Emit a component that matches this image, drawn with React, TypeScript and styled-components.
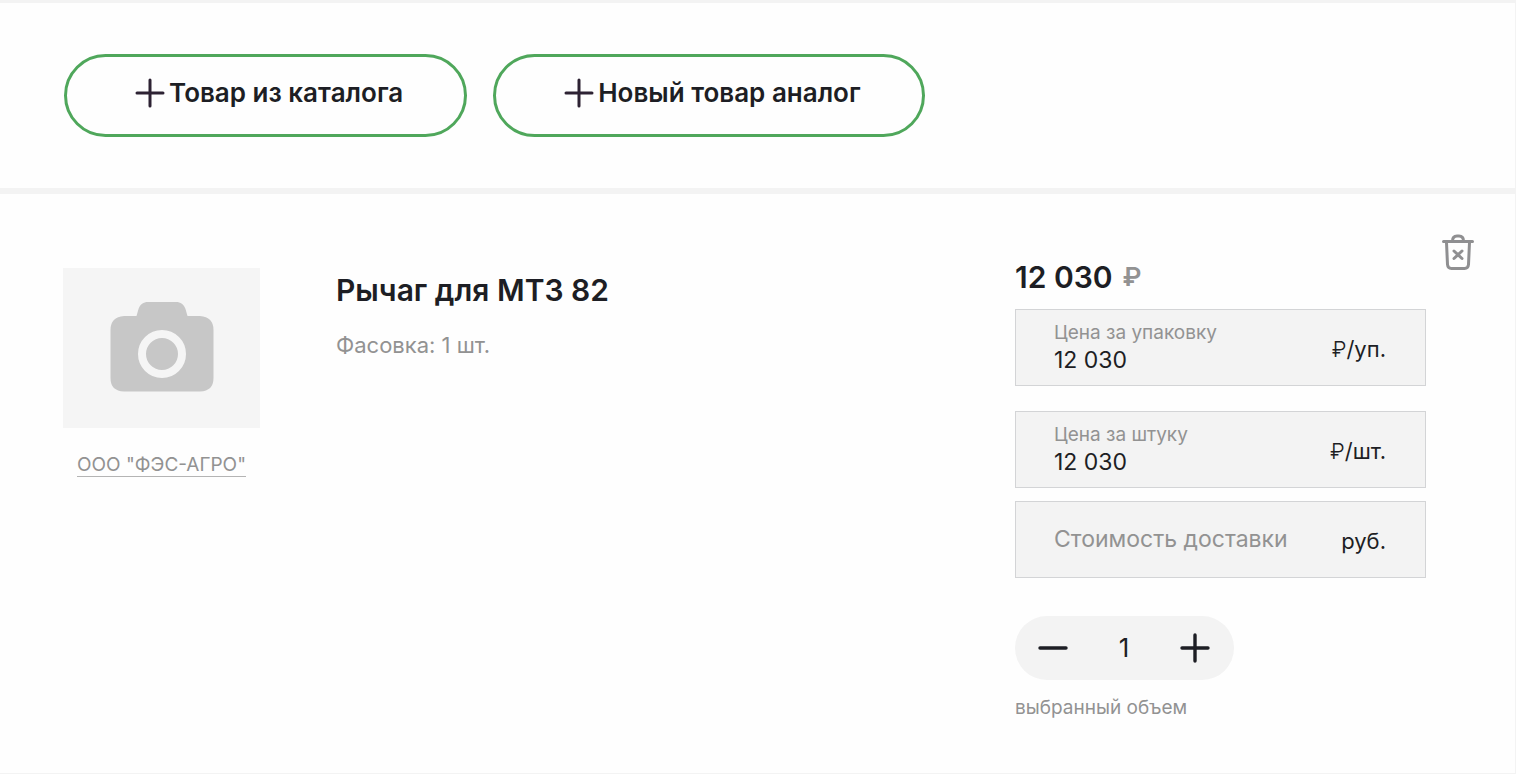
import React, { useState } from "react";
import styled, { createGlobalStyle } from "styled-components";

const ink = "#1d1e24";
const muted = "#929292";

const GlobalStyle = createGlobalStyle`
  *, *::before, *::after { box-sizing: border-box; }
  body {
    margin: 0;
    background: #fefefe;
    color: ${ink};
    font-family: Inter, "Noto Sans", sans-serif;
  }
  button, input { font: inherit; color: inherit; }
`;

const Page = styled.main`
  min-height: 100vh;
  border: solid #f3f3f3;
  border-width: 3px 1px 1px 0;
`;

const Toolbar = styled.div`
  display: flex;
  flex-wrap: wrap;
  gap: 26px;
  padding: 51px 64px;
  border-bottom: 6px solid #f3f3f3;
`;

const AddButton = styled.button`
  display: flex;
  align-items: center;
  gap: 4px;
  height: 83px;
  padding: 0 61px 6px 68px;
  border: 3px solid #4fa75b;
  border-radius: 42px;
  background: none;
  font-size: 26px;
  line-height: 32px;
  font-weight: 600;
  white-space: nowrap;
  cursor: pointer;
`;

const Product = styled.article`
  display: grid;
  grid-template-columns: 197px minmax(0, 1fr) 411px 48px;
  align-items: start;
  padding: 40px 41px 52px 63px;
`;

const Media = styled.div`
  display: flex;
  flex-direction: column;
  align-items: center;
  gap: 26px;
  padding-top: 34px;
`;

const Photo = styled.div`
  display: flex;
  justify-content: center;
  align-items: center;
  width: 100%;
  height: 160px;
  padding-bottom: 2px;
  background: #f5f5f5;
`;

const Seller = styled.a`
  border-bottom: 1px solid #b4b4b4;
  color: ${muted};
  font-size: 19px;
  line-height: 22px;
  text-decoration: none;
  white-space: nowrap;
`;

const Info = styled.div`
  padding: 38px 24px 0 76px;
`;

const Title = styled.h2`
  margin: 0;
  font-size: 30px;
  line-height: 36px;
  font-weight: 600;
`;

const Packing = styled.p`
  margin: 22px 0 0;
  color: ${muted};
  font-size: 22px;
  line-height: 30px;
`;

const Offer = styled.div`
  display: flex;
  flex-direction: column;
  padding-top: 25px;
`;

const Total = styled.div`
  display: flex;
  align-items: center;
  gap: 10px;
  margin-bottom: 14px;
  font-size: 30px;
  line-height: 36px;
  font-weight: 600;
`;

const Currency = styled.span`
  color: ${muted};
  font-size: 26px;
`;

const Fields = styled.div`
  display: flex;
  flex-direction: column;
  gap: 25px;
  margin-bottom: 13px;
`;

const Field = styled.label`
  display: flex;
  align-items: center;
  justify-content: space-between;
  height: 77px;
  padding: 3px 39px 0 38px;
  border: 1px solid #d3d4d6;
  background: #f3f3f3;
  font-size: 22px;
  line-height: 28px;
  cursor: text;
`;

const FieldBody = styled.span`
  display: flex;
  flex: 1;
  flex-direction: column;
  min-width: 0;
  padding-bottom: 4px;
`;

const FieldCaption = styled.span`
  color: ${muted};
  font-size: 19px;
  line-height: 26px;
`;

const FieldInput = styled.input`
  width: 100%;
  height: 28px;
  padding: 0;
  border: 0;
  outline: 0;
  background: none;
  font-size: 23px;

  &::placeholder {
    color: ${muted};
    opacity: 1;
  }
`;

const Ruble = styled.span`
  font-weight: 300;
`;

const Counter = styled.div`
  display: flex;
  align-items: center;
  justify-content: space-between;
  width: 219px;
  height: 64px;
  margin-top: 38px;
  padding: 0 24px 0 23px;
  border-radius: 32px;
  background: #f3f3f3;
`;

const IconButton = styled.button`
  display: flex;
  padding: 0;
  border: 0;
  background: none;
  cursor: pointer;
`;

const Amount = styled.input`
  width: 60px;
  padding: 0;
  border: 0;
  outline: 0;
  background: none;
  font-size: 26px;
  line-height: 32px;
  text-align: center;
`;

const Hint = styled.p`
  margin: 16px 0 0;
  color: ${muted};
  font-size: 19px;
  line-height: 24px;
`;

const RemoveButton = styled(IconButton)`
  justify-self: end;
`;

const PlusIcon = ({ color = ink, weight = 3 }: { color?: string; weight?: number }) => (
  <svg width="30" height="30" viewBox="0 0 30 30" stroke={color} strokeWidth={weight} strokeLinecap="round" aria-hidden="true">
    <path d="M2 15H28M15 2V28" />
  </svg>
);

const MinusIcon = () => (
  <svg width="30" height="30" viewBox="0 0 30 30" stroke={ink} strokeWidth="3.4" strokeLinecap="round" aria-hidden="true">
    <path d="M2 15H28" />
  </svg>
);

const CameraIcon = () => (
  <svg width="104" height="90" viewBox="0 0 104 90" aria-hidden="true">
    <path
      fill="#c7c7c7"
      d="M14 14H26.500L28.500 7C30 2.500 33.500 0 38 0H66C70.500 0 74 2.500 75.500 7L77.500 14H90Q103.500 15 103.500 28V76Q103.500 89 90 89.500H14Q.5 89 .5 76V28Q.5 15 14 14Z"
    />
    <circle cx="52" cy="52" r="20" fill="none" stroke="#f5f5f5" strokeWidth="8" />
  </svg>
);

const TrashIcon = () => (
  <svg width="32" height="36" viewBox="0 0 32 36" fill="none" stroke="#8f8f91" strokeWidth="3" strokeLinecap="round" strokeLinejoin="round" aria-hidden="true">
    <path d="M1.500 7.500H30.500M4.500 8.500L5.500 30.500Q5.800 34.500 9.500 34.500H22.500Q26.200 34.500 26.500 30.500L27.500 8.500M10.500 7Q10.500 2 15 2H17Q21.500 2 21.500 7" />
    <path d="M12 17L20 24.500M20 17L12 24.500" />
  </svg>
);

type PriceFieldProps = { caption?: string; placeholder?: string; initial?: string; unit: React.ReactNode };

const PriceField = ({ caption, placeholder, initial = "", unit }: PriceFieldProps) => {
  const [value, setValue] = useState(initial);
  return (
    <Field>
      <FieldBody>
        {caption && <FieldCaption>{caption}</FieldCaption>}
        <FieldInput
          value={value}
          placeholder={placeholder}
          aria-label={caption ? undefined : placeholder}
          onChange={(e) => setValue(e.target.value)}
        />
      </FieldBody>
      <span>{unit}</span>
    </Field>
  );
};

export default function App() {
  const [amount, setAmount] = useState(1);
  return (
    <>
      <GlobalStyle />
      <Page>
        <Toolbar>
          {["Товар из каталога", "Новый товар аналог"].map((text) => (
            <AddButton key={text} type="button">
              <PlusIcon color="#2d2233" />
              {text}
            </AddButton>
          ))}
        </Toolbar>
        <Product>
          <Media>
            <Photo>
              <CameraIcon />
            </Photo>
            <Seller href="#seller">ООО "ФЭС-АГРО"</Seller>
          </Media>
          <Info>
            <Title>Рычаг для МТЗ 82</Title>
            <Packing>Фасовка: 1 шт.</Packing>
          </Info>
          <Offer>
            <Total>
              12 030 <Currency>₽</Currency>
            </Total>
            <Fields>
              <PriceField caption="Цена за упаковку" initial="12 030" unit={<><Ruble>₽</Ruble>/уп.</>} />
              <PriceField caption="Цена за штуку" initial="12 030" unit={<><Ruble>₽</Ruble>/шт.</>} />
            </Fields>
            <PriceField placeholder="Стоимость доставки" unit="руб." />
            <Counter>
              <IconButton type="button" aria-label="Уменьшить" onClick={() => setAmount(Math.max(1, amount - 1))}>
                <MinusIcon />
              </IconButton>
              <Amount
                aria-label="выбранный объем"
                value={amount}
                onChange={(e) => setAmount(Number(e.target.value) || 1)}
              />
              <IconButton type="button" aria-label="Увеличить" onClick={() => setAmount(amount + 1)}>
                <PlusIcon weight={3.4} />
              </IconButton>
            </Counter>
            <Hint>выбранный объем</Hint>
          </Offer>
          <RemoveButton type="button" aria-label="Удалить">
            <TrashIcon />
          </RemoveButton>
        </Product>
      </Page>
    </>
  );
}
